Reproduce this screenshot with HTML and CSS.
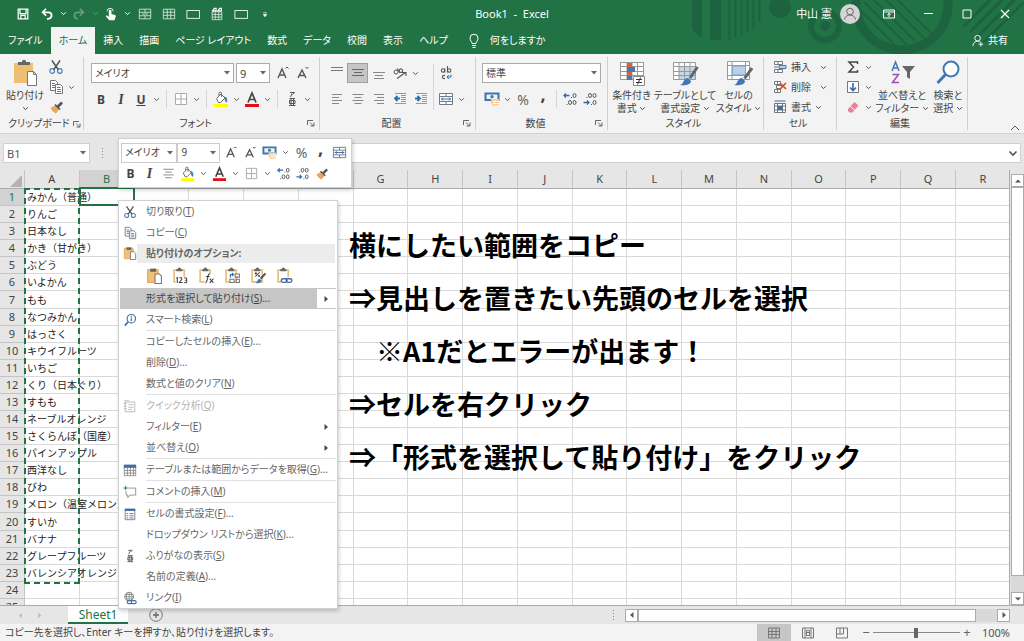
FILE: index.html
```html
<!DOCTYPE html>
<html lang="ja">
<head>
<meta charset="utf-8">
<meta name="viewport" content="width=device-width, initial-scale=1">
<title>Book1 - Excel</title>
<link rel="stylesheet" href="styles.css">
</head>
<body>
<svg class="sprite" aria-hidden="true">
  <symbol id="caret" viewBox="0 0 7 7"><path d="M1.2 2.3l2.3 2.3 2.3-2.3" fill="none" stroke="currentColor"/></symbol>
  <symbol id="grow" viewBox="0 0 16 16"><path d="M3 13L7 4l4 9M4.500 10h5" fill="none" stroke="#555" stroke-width="1.400"/><path d="M10.500 3.500l1.500-1.500 1.500 1.500" fill="none" stroke="#456"/></symbol>
  <symbol id="shrink" viewBox="0 0 16 16"><path d="M3 13L7 5l4 8M4.500 10.500h5" fill="none" stroke="#555" stroke-width="1.400"/><path d="M10.500 2l1.500 1.500L13.500 2" fill="none" stroke="#456"/></symbol>
  <symbol id="border" viewBox="0 0 16 16"><path d="M2.500 2.500h11v11h-11zM8 2.500v11M2.500 8h11" fill="#fff" stroke="#aaa"/></symbol>
  <symbol id="fill" viewBox="0 0 16 16"><path d="M1 13h14v3H1z" fill="#ffff00"/><path d="M3.500 7.500L8 3l4 4-4.500 4.500H5.500z" fill="#fff" stroke="#666"/><path d="M6 5V2.500a1.300 1.300 0 0 1 2.600 0V6" fill="none" stroke="#666"/><path d="M11.500 6c2.500 0 2.500 3 2 5-1.500-.5-1-3-2-5z" fill="#3f75b5" stroke="#3f75b5"/></symbol>
  <symbol id="fcolor" viewBox="0 0 16 16"><path d="M1 13h14v3H1z" fill="#e0101b"/><path d="M4 11.500L8 2l4 9.500M5.500 8.500h5" fill="none" stroke="#444" stroke-width="1.700"/></symbol>
  <symbol id="ruby" viewBox="0 0 16 16"><path d="M6 1.500h4.500l-2 2M8 2.500L6.500 6M5.500 7.500h5.500M5 14.500h6.500M7 7.500v7M9.500 7.500v7M5.500 9.500h5.500v3H5.500z" fill="none" stroke="#555"/></symbol>
  <symbol id="al-top" viewBox="0 0 16 16"><path d="M2 2.500h12M2 5.500h12" stroke="#777"/></symbol>
  <symbol id="al-mid" viewBox="0 0 16 16"><path d="M2 4.500h12M4 7.500h8M2 10.500h12" stroke="#666"/></symbol>
  <symbol id="al-bot" viewBox="0 0 16 16"><path d="M2 7.500h12M4 10.500h8M3 13.500h10" stroke="#888"/></symbol>
  <symbol id="al-left" viewBox="0 0 16 16"><path d="M3 3.500h10M3 6.500h7M3 9.500h10M3 12.500h7" stroke="#888"/></symbol>
  <symbol id="al-cen" viewBox="0 0 16 16"><path d="M2.500 3.500h11M4.500 6.500h7M2.500 9.500h11M4.500 12.500h7" stroke="#888"/></symbol>
  <symbol id="al-right" viewBox="0 0 16 16"><path d="M3 3.500h10M6 6.500h7M3 9.500h10M6 12.500h7" stroke="#888"/></symbol>
  <symbol id="dedent" viewBox="0 0 16 16"><path d="M3 2.500h11M9 4.500h5M9 6.500h5M9 8.500h5M9 10.500h5M3 12.500h11" stroke="#999"/><path d="M8 7.500H3M5.500 5L3 7.500 5.500 10" fill="none" stroke="#2f6cb3" stroke-width="1.800"/></symbol>
  <symbol id="indent" viewBox="0 0 16 16"><path d="M3 2.500h11M9 4.500h5M9 6.500h5M9 8.500h5M9 10.500h5M3 12.500h11" stroke="#999"/><path d="M2 7.500h5M4.500 5L7 7.500 4.500 10" fill="none" stroke="#2f6cb3" stroke-width="1.800"/></symbol>
  <symbol id="orient" viewBox="0 0 16 16"><circle cx="4" cy="7" r="2" fill="none" stroke="#555"/><path d="M5 3.500l3 4.500M8 7.500c-2-3 1-5 2.500-2.500.5 1.500-.5 2.500-2 2.500M5 13.500l8.500-6M10 7.500h4v3.500" fill="none" stroke="#555" stroke-width="1.100"/></symbol>
  <symbol id="wrap" viewBox="0 0 16 16"><g fill="none" stroke="#555" stroke-width="1.100"><circle cx="5" cy="5.500" r="1.700"/><path d="M6.800 3.500v4M9.500 1v6.500"/><circle cx="11.200" cy="5.500" r="1.700"/><path d="M7 10.500c-3.500-1-3.500 4 0 3"/></g><path d="M13 9.500v2.500H9M10.800 10L9 12l1.800 2" fill="none" stroke="#2f6cb3"/></symbol>
  <symbol id="merge" viewBox="0 0 16 16"><path d="M1.500 2.500h13v11h-13zM1.500 5.500h13M1.500 10.500h13M8 2.500v3M8 10.500v3" fill="#fff" stroke="#778"/><path d="M3 8h10M5 6.500L3.500 8 5 9.500M11 6.500L12.500 8 11 9.500" fill="none" stroke="#2f6cb3"/></symbol>
  <symbol id="money" viewBox="0 0 16 16"><path d="M1.500 2.500h13v6.500h-13z" fill="#eaf2fa" stroke="#3f75a8" stroke-width="2"/><circle cx="8" cy="5.700" r="1.600" fill="#3f75a8"/><path d="M7 8h8v6l-6 1-2-3z" fill="#f6cf9b"/><path d="M9 10.500h6M9 12.500h6" stroke="#fff"/></symbol>
  <symbol id="dec-inc" viewBox="0 0 16 16"><g fill="none" stroke="#555"><ellipse cx="12.500" cy="4.500" rx="1.500" ry="2"/><ellipse cx="8" cy="11.500" rx="1.500" ry="2"/><ellipse cx="12.500" cy="11.500" rx="1.500" ry="2"/></g><path d="M9 6h1v1H9zM4.500 13h1v1h-1z" fill="#555"/><path d="M7.500 4.500H2M4 2.500l-2 2 2 2" fill="none" stroke="#2f6cb3" stroke-width="1.300"/></symbol>
  <symbol id="dec-dec" viewBox="0 0 16 16"><g fill="none" stroke="#555"><ellipse cx="8" cy="4.500" rx="1.500" ry="2"/><ellipse cx="12.500" cy="4.500" rx="1.500" ry="2"/><ellipse cx="12.500" cy="11.500" rx="1.500" ry="2"/></g><path d="M4.500 6h1v1h-1zM9 13h1v1H9z" fill="#555"/><path d="M1.500 11.500H7M5 9.500l2 2-2 2" fill="none" stroke="#2f6cb3" stroke-width="1.300"/></symbol>
  <symbol id="brush" viewBox="0 0 16 16"><path d="M2.500 9l5-3 4 4-3.500 4.500c-2-1-4-2.500-5.500-5.500z" fill="#eda662"/><path d="M7 5.500l5 5" stroke="#555" stroke-width="1.600"/><path d="M9.500 8L14 3.500" stroke="#555" stroke-width="2.600"/></symbol>
  <symbol id="cut" viewBox="0 0 16 16"><path d="M4 1.500l6.500 9.500M12 1.500L5.500 11" stroke="#555" stroke-width="1.500"/><circle cx="4.200" cy="12" r="2.300" fill="none" stroke="#4a80b8" stroke-width="1.200"/><circle cx="11.800" cy="12" r="2.300" fill="none" stroke="#4a80b8" stroke-width="1.200"/></symbol>
  <symbol id="copy" viewBox="0 0 16 16"><g fill="#fff" stroke="#777"><path d="M2.500 1.500h5l2 2v8h-7z"/><path d="M7.500 5.500h5l2 2v7h-7z"/></g><path d="M4 4.500h3M4 6.500h3M4 8.500h3M9 8.500h3.500M9 10.500h4M9 12.500h4" stroke="#4a80b8"/></symbol>
  <symbol id="clip" viewBox="0 0 16 16"><path d="M1.500 2.500h10v12h-10z" fill="#f0c078" stroke="#e0a95a"/><path d="M4 1.500h5.500v3H4z" fill="#666"/><path d="M8.500 6.500h4l2 2v7h-6z" fill="#fff" stroke="#777"/></symbol>
  <symbol id="clipbase" viewBox="0 0 16 16"><path d="M2 3h9.500v11H2z" fill="#fff" stroke="#eabf7c" stroke-width="1.600"/><path d="M4.500 3.500v-1h1.200c0-2 2.400-2 2.400 0h1.200v1z" fill="#666" stroke="#666"/></symbol>
  <symbol id="bigclip" viewBox="0 0 26 28"><path d="M2 4h19v20H2z" fill="#eebf73"/><path d="M6 6V3h4c0-3 4-3 4 0h4v3z" fill="#666"/><path d="M15.500 12.500h6l3 3v11h-9z" fill="#fff" stroke="#777"/><path d="M21.500 12.500v3h3" fill="none" stroke="#777"/></symbol>
  <symbol id="launch" viewBox="0 0 8 8"><path d="M.5 6V1.500H6M3 3.500l3.500 3.500M7 3.500V7H3.500" fill="none" stroke="#666"/></symbol>
  <symbol id="tri-r" viewBox="0 0 8 8"><path d="M2.500 1v6L6 4z" fill="currentColor"/></symbol>
  <symbol id="tri-l" viewBox="0 0 8 8"><path d="M5.500 1v6L2 4z" fill="currentColor"/></symbol>
  <symbol id="tri-u" viewBox="0 0 8 8"><path d="M1 5.500h6L4 2.500z" fill="currentColor"/></symbol>
  <symbol id="tri-d" viewBox="0 0 8 8"><path d="M1 2.500h6L4 5.500z" fill="currentColor"/></symbol>
</svg>

<header class="top">
  <svg class="deco" viewBox="0 0 344 54" aria-hidden="true">
    <g fill="none" stroke="#1d6340">
      <path d="M12 0v28q3 7 10 9V0zM30 0h11v40h-11z" fill="#1d6340" stroke="none"/>
      <path d="M49.500 0v40M55.500 0v38M61.500 0v36M67.500 0v33M73.500 0v28M79.500 0v22" stroke-width="2"/>
      <circle cx="100" cy="7" r="11" fill="#1d6340" stroke="none"/>
      <circle cx="145" cy="26" r="14" stroke-width="6"/><circle cx="145" cy="26" r="5" fill="#1d6340" stroke="none"/>
      <circle cx="222" cy="4" r="46" stroke-width="9"/>
      <path d="M176 6l43 43M184 2l43 43M192-2l43 43M200-6l45 45M208-10l44 44" stroke-width="2"/>
      <path d="M284 26l28-28M290 32l34-34M296 38l40-40M304 42l40-40" stroke-width="3"/>
    </g>
  </svg>
  <div class="titlebar">
    <div class="qat">
      <button class="q" aria-label="上書き保存"><svg viewBox="0 0 16 16"><path d="M2.500 2.500h11v11h-11zM4.500 2.500v5h7v-5M5.500 13.500v-4h5v4" fill="none" stroke="#fff" stroke-width="1.400"/></svg></button>
      <button class="q undo" aria-label="元に戻す"><svg viewBox="0 0 16 16"><path d="M7 2L3 6l4 4M3.500 6h6c5 0 5 7 0 7.500H8" fill="none" stroke="#fff" stroke-width="2"/></svg></button>
      <button class="v" aria-label="元に戻す一覧"><svg><use href="#caret"/></svg></button>
      <button class="q off" aria-label="やり直し"><svg viewBox="0 0 16 16"><path d="M9 2l4 4-4 4M12.500 6h-6c-5 0-5 7 0 7.500" fill="none" stroke="#fff" stroke-width="2"/></svg></button>
      <button class="v off" aria-label="やり直し一覧"><svg><use href="#caret"/></svg></button>
      <button class="q" aria-label="タッチ/マウス モードの切り替え"><svg viewBox="0 0 16 16"><path d="M3.500 5a3.500 3.500 0 1 1 7 0" fill="none" stroke="#fff"/><path d="M5.500 4.500a1.500 1.500 0 0 1 3 0V8l4 1.200c1 .4 1 1 .8 2L12 15H6L2 10.500l1-1 2.500 1.500z" fill="#fff"/></svg></button>
      <button class="v" aria-label="モード一覧"><svg><use href="#caret"/></svg></button>
      <button class="q w24" aria-label="行"><svg viewBox="0 0 16 16"><path d="M1.500 2.500h13v11h-13zM1.500 6h13M1.500 10h13M8 2.500V6M8 10v3.500M4.500 8h7" fill="none" stroke="#d5e6dc"/></svg></button>
      <button class="q w24" aria-label="列"><svg viewBox="0 0 16 16"><path d="M1.500 2.500h13v11h-13zM6 2.500v11M10 2.500v11M1.500 6h13M1.500 9.500h13" fill="none" stroke="#d5e6dc"/></svg></button>
      <button class="q w24" aria-label="枠"><svg viewBox="0 0 16 16"><path d="M1 4h14.500v9H1z" fill="none" stroke="#fff"/></svg></button>
      <button class="q w24" aria-label="検索"><svg viewBox="0 0 16 16"><path d="M2.500 5.500h11v9h-11zM2.500 8.500h11M2.500 11.500h11M6 6v8M10 6v8" fill="none" stroke="#d5e6dc"/><path d="M3 4.500l2-3h2v3zM9 4.500l2-3h2v3z" fill="#217346" stroke="#fff" stroke-width="1.300"/></svg></button>
      <button class="q w24" aria-label="図形"><svg viewBox="0 0 16 16"><path d="M1 4h14.500v9H1z" fill="none" stroke="#fff"/></svg></button>
      <button class="q w24" aria-label="カスタマイズ"><svg viewBox="0 0 16 16"><path d="M6 6.500h4M6 8.500h4l-2 2.500z" fill="#fff" stroke="#fff" stroke-width=".8"/></svg></button>
    </div>
    <h1 class="doc">Book1&nbsp; -&nbsp; Excel</h1>
    <div class="win">
      <span class="user">中山 憲</span>
      <svg class="avatar" viewBox="0 0 20 20"><circle cx="10" cy="10" r="10" fill="#d5d5d5"/><circle cx="10" cy="7.500" r="3.300" fill="none" stroke="#666"/><path d="M4.500 15.500c1-6 10-6 11 0" fill="none" stroke="#666"/></svg>
      <button class="wb" aria-label="リボンの表示オプション"><svg viewBox="0 0 14 14"><path d="M1.500 3h11v8h-11zM1.500 5h11M7 10V6.500M5.200 8L7 6.300 8.800 8" fill="none" stroke="#fff"/></svg></button>
      <button class="wb" aria-label="最小化"><svg viewBox="0 0 14 14"><path d="M3 6.500h9" stroke="#fff"/></svg></button>
      <button class="wb" aria-label="最大化"><svg viewBox="0 0 14 14"><path d="M3 3h8v8H3z" fill="none" stroke="#fff"/></svg></button>
      <button class="wb" aria-label="閉じる"><svg viewBox="0 0 14 14"><path d="M3 3l8 8M11 3l-8 8" stroke="#fff" stroke-width="1.200"/></svg></button>
    </div>
  </div>
  <nav class="tabs">
    <button>ファイル</button><button class="on">ホーム</button><button>挿入</button><button>描画</button><button>ページ レイアウト</button><button>数式</button><button>データ</button><button>校閲</button><button>表示</button><button>ヘルプ</button>
    <button class="tell"><svg viewBox="0 0 12 16"><path d="M4 10.500C4 8.500 2 8 2 5.200a4 4 0 0 1 8 0C10 8 8 8.500 8 10.500zM4 12.500h4M4.500 14.500h3" fill="none" stroke="#fff"/></svg>何をしますか</button>
    <button class="share"><svg viewBox="0 0 14 14"><circle cx="6" cy="4.500" r="3" fill="none" stroke="#fff"/><path d="M1 13c.5-6 6-6 8-4M9.500 8.500v5M7 11h5" fill="none" stroke="#fff"/></svg>共有</button>
  </nav>
</header>

<section class="ribbon" aria-label="ホーム">
  <div class="group g-clip">
    <div class="body">
      <button class="big"><svg class="bi"><use href="#bigclip"/></svg><span>貼り付け</span><svg class="c"><use href="#caret"/></svg></button>
      <div class="stack">
        <button class="b" aria-label="切り取り"><svg><use href="#cut"/></svg></button>
        <div class="row"><button class="b" aria-label="コピー"><svg><use href="#copy"/></svg></button><button class="v" aria-label="コピー一覧"><svg><use href="#caret"/></svg></button></div>
        <button class="b" aria-label="書式のコピー"><svg><use href="#brush"/></svg></button>
      </div>
    </div>
    <div class="label"><span>クリップボード</span><svg class="la"><use href="#launch"/></svg></div>
  </div>
  <div class="group g-font">
    <div class="body two">
      <div class="row"><select class="sel grow" aria-label="フォント"><option>メイリオ</option></select><select class="sel size" aria-label="サイズ"><option>9</option></select><button class="b" aria-label="拡大"><svg><use href="#grow"/></svg></button><button class="b" aria-label="縮小"><svg><use href="#shrink"/></svg></button></div>
      <div class="row"><button class="b t"><b>B</b></button><button class="b t"><i>I</i></button><button class="b t"><u>U</u></button><button class="v" aria-label="下線一覧"><svg><use href="#caret"/></svg></button><i class="div"></i><button class="b" aria-label="罫線"><svg><use href="#border"/></svg></button><button class="v" aria-label="罫線一覧"><svg><use href="#caret"/></svg></button><i class="div"></i><button class="b" aria-label="塗りつぶし"><svg><use href="#fill"/></svg></button><button class="v" aria-label="塗りつぶし一覧"><svg><use href="#caret"/></svg></button><button class="b" aria-label="文字色"><svg><use href="#fcolor"/></svg></button><button class="v" aria-label="文字色一覧"><svg><use href="#caret"/></svg></button><i class="div"></i><button class="b" aria-label="ふりがな"><svg><use href="#ruby"/></svg></button><button class="v" aria-label="ふりがな一覧"><svg><use href="#caret"/></svg></button></div>
    </div>
    <div class="label"><span>フォント</span><svg class="la"><use href="#launch"/></svg></div>
  </div>
  <div class="group g-align">
    <div class="body">
      <div class="two al">
        <div class="row"><button class="b" aria-label="上揃え"><svg><use href="#al-top"/></svg></button><button class="b on" aria-label="上下中央"><svg><use href="#al-mid"/></svg></button><button class="b" aria-label="下揃え"><svg><use href="#al-bot"/></svg></button><button class="b" aria-label="方向"><svg><use href="#orient"/></svg></button><button class="v" aria-label="方向一覧"><svg><use href="#caret"/></svg></button></div>
        <div class="row"><button class="b" aria-label="左揃え"><svg><use href="#al-left"/></svg></button><button class="b" aria-label="中央揃え"><svg><use href="#al-cen"/></svg></button><button class="b" aria-label="右揃え"><svg><use href="#al-right"/></svg></button><button class="b" aria-label="インデント減"><svg><use href="#dedent"/></svg></button><button class="b" aria-label="インデント増"><svg><use href="#indent"/></svg></button></div>
      </div>
      <i class="div tall"></i>
      <div class="two">
        <div class="row"><button class="b" aria-label="折り返し"><svg><use href="#wrap"/></svg></button></div>
        <div class="row"><button class="b" aria-label="結合"><svg><use href="#merge"/></svg></button><button class="v" aria-label="結合一覧"><svg><use href="#caret"/></svg></button></div>
      </div>
    </div>
    <div class="label"><span>配置</span><svg class="la"><use href="#launch"/></svg></div>
  </div>
  <div class="group g-num">
    <div class="body two">
      <div class="row"><select class="sel grow" aria-label="表示形式"><option>標準</option></select></div>
      <div class="row"><button class="b" aria-label="通貨"><svg><use href="#money"/></svg></button><button class="v" aria-label="通貨一覧"><svg><use href="#caret"/></svg></button><button class="b t pc">%</button><button class="b t cm"><b>,</b></button><i class="div"></i><button class="b" aria-label="小数点以下を増やす"><svg><use href="#dec-inc"/></svg></button><button class="b" aria-label="小数点以下を減らす"><svg><use href="#dec-dec"/></svg></button></div>
    </div>
    <div class="label"><span>数値</span><svg class="la"><use href="#launch"/></svg></div>
  </div>
  <div class="group g-style">
    <div class="body">
      <button class="big cond"><svg class="bi" viewBox="0 0 28 28"><path d="M2.500 3.500h23v17h-23zM2.500 7.500h23M2.500 12.500h23M2.500 16.500h23M9 3.500v17M14 3.500v17M19.500 3.500v17" fill="#fff" stroke="#999"/><path d="M9 4h5v4H9zM9 13h5v4H9z" fill="#d9603b"/><path d="M9 8h8v5H9zM9 17h5v4H9z" fill="#4777ad"/><path d="M15.500 17.500h11v9h-11z" fill="#fff" stroke="#888"/><path d="M18 20.500h6M18 23.500h6M22.500 18.500l-3 7" stroke="#333"/></svg><span>条件付き<br>書式 <svg class="c"><use href="#caret"/></svg></span></button>
      <button class="big mid"><svg class="bi" viewBox="0 0 28 28"><path d="M2.500 3.500h22v17h-22z" fill="#fff"/><path d="M8 8h17v13H8z" fill="#c3d6ea"/><path d="M2.500 3.500h22v17h-22zM2.500 7.500h22M2.500 12.500h22M2.500 16.500h22M8 3.500v17M13.500 3.500v17M19 3.500v17" fill="none" stroke="#999"/><path d="M26.500 8L19 19" stroke="#666" stroke-width="3"/><path d="M9 26c4-.5 3-7 8-7l3 3c0 4-7 5-11 4z" fill="#3f78b5"/></svg><span>テーブルとして<br>書式設定 <svg class="c"><use href="#caret"/></svg></span></button>
      <button class="big cond"><svg class="bi" viewBox="0 0 28 28"><path d="M2.500 2.500h22v18h-22zM2.500 6.500h22M2.500 16.500h22M7 2.500v18M20.500 2.500v18" fill="#fff" stroke="#999"/><path d="M7.500 7h13v9h-13z" fill="#b9d0e8" stroke="#7ea3cb"/><path d="M27 9l-7.500 10.500" stroke="#666" stroke-width="3"/><path d="M9 26c4-.5 3-7 8-7l3 3c0 4-7 5-11 4z" fill="#3f78b5"/></svg><span>セルの<br>スタイル <svg class="c"><use href="#caret"/></svg></span></button>
    </div>
    <div class="label"><span>スタイル</span></div>
  </div>
  <div class="group g-cell">
    <div class="body stack">
      <button class="line"><svg class="li" viewBox="0 0 14 14"><path d="M1.500 1.500h8v3h-8zM5 1.500v3M1.500 9.500h8v3h-8zM5 9.500v3" fill="#fff" stroke="#777"/><path d="M6 5.500h7v3H6z" fill="#b9d0e8" stroke="#4777ad"/><path d="M5 7H1" stroke="#4777ad"/></svg><span>挿入</span><svg class="c"><use href="#caret"/></svg></button>
      <button class="line"><svg class="li" viewBox="0 0 14 14"><path d="M1.500 1.500h6v3h-6zM1.500 9.500h6v3h-6zM4.500 1.500v3M4.500 9.500v3M3.500 5.500h5v3h-5z" fill="#fff" stroke="#777"/><path d="M7 3l6 6M13 3L7 9" stroke="#d9472b" stroke-width="1.600"/></svg><span>削除</span><svg class="c"><use href="#caret"/></svg></button>
      <button class="line"><svg class="li" viewBox="0 0 14 14"><path d="M1.500 3.500h11v9h-11zM1.500 6h11M1.500 10h11M4.500 3.500v9M9.500 3.500v9" fill="#fff" stroke="#777"/><path d="M5 6h4.500v4H5z" fill="#3f6da5"/><path d="M1.500 1h11" stroke="#3f6da5"/></svg><span>書式</span><svg class="c near"><use href="#caret"/></svg></button>
    </div>
    <div class="label"><span>セル</span></div>
  </div>
  <div class="group g-edit">
    <div class="body">
      <div class="stack">
        <div class="row"><button class="b" aria-label="合計"><svg viewBox="0 0 16 16"><path d="M12.500 5V3H4l4.500 5L4 13h8.500v-2" fill="none" stroke="#444" stroke-width="1.500"/></svg></button><button class="v" aria-label="合計一覧"><svg><use href="#caret"/></svg></button></div>
        <div class="row"><button class="b" aria-label="フィル"><svg viewBox="0 0 16 16"><path d="M2.500 2.500h11v11h-11z" fill="#fff" stroke="#777"/><path d="M8 4v7M5 8.500L8 11.500l3-3" fill="none" stroke="#2f6cb3" stroke-width="1.600"/></svg></button><button class="v" aria-label="フィル一覧"><svg><use href="#caret"/></svg></button></div>
        <div class="row"><button class="b" aria-label="クリア"><svg viewBox="0 0 16 16"><path d="M3 10l6.500-7 4 3.500-6 7H4.500L3 12z" fill="#e8829b"/><path d="M5.500 7.500l4 3.500" stroke="#fff"/></svg></button><button class="v" aria-label="クリア一覧"><svg><use href="#caret"/></svg></button></div>
      </div>
      <button class="big sort"><svg class="bi" viewBox="0 0 28 28"><path d="M4 12L7.500 3 11 12M5 9h5" fill="none" stroke="#3f78b5" stroke-width="1.500"/><path d="M4.500 15.500h6l-6 8h6.500" fill="none" stroke="#9a4fb0" stroke-width="1.500"/><path d="M14 7h13l-5 6v7l-3-2v-5z" fill="#666"/></svg><span>並べ替えと<br>フィルター <svg class="c"><use href="#caret"/></svg></span></button>
      <button class="big find"><svg class="bi" viewBox="0 0 28 28"><circle cx="17" cy="10" r="7.500" fill="#fff" stroke="#3f78b5" stroke-width="2"/><path d="M11.500 15.500L3.500 24" stroke="#3f78b5" stroke-width="3"/></svg><span>検索と<br>選択 <svg class="c"><use href="#caret"/></svg></span></button>
    </div>
    <div class="label"><span>編集</span></div>
  </div>
  <button class="fold" aria-label="リボンを折りたたむ"><svg viewBox="0 0 10 10"><path d="M1 7l4-4 4 4" fill="none" stroke="#555"/></svg></button>
</section>

<section class="fbar">
  <select class="sel name" aria-label="名前ボックス"><option>B1</option></select>
  <svg class="dots" viewBox="0 0 3 12"><path d="M1 1h1v1H1zM1 4h1v1H1zM1 7h1v1H1zM1 10h1v1H1z" fill="#888"/></svg>
  <div class="formula"><input type="text" aria-label="数式バー"><svg viewBox="0 0 10 10"><path d="M1.500 3.500L5 7l3.500-3.500" fill="none" stroke="#555" stroke-width="1.600"/></svg></div>
</section>

<main class="sheet">
  <div class="gridwrap"><table class="grid"><thead><tr id="cols"><th class="corner"><svg viewBox="0 0 12 12"><path d="M12 0v12H0z" fill="#b4b4b4"/></svg></th></tr></thead><tbody id="rows"></tbody></table></div>
  <div class="vscroll"><button aria-label="上へ"><svg><use href="#tri-u"/></svg></button><i class="thumb"></i><i class="track"></i><button aria-label="下へ"><svg><use href="#tri-d"/></svg></button></div>
  <div class="note">
    <p>横にしたい範囲をコピー</p>
    <p>⇒見出しを置きたい先頭のセルを選択</p>
    <p>　※A1だとエラーが出ます！</p>
    <p>⇒セルを右クリック</p>
    <p>⇒「形式を選択して貼り付け」をクリック</p>
  </div>
</main>

<div class="sheetbar">
  <button class="nav" aria-label="前のシート"><svg><use href="#tri-l"/></svg></button><button class="nav" aria-label="次のシート"><svg><use href="#tri-r"/></svg></button>
  <button class="tab">Sheet1</button>
  <button class="add" aria-label="新しいシート"><svg viewBox="0 0 14 14"><circle cx="7" cy="7" r="6.300" fill="none" stroke="#777"/><path d="M7 4v6M4 7h6" stroke="#666" stroke-width="1.300"/></svg></button>
  <svg class="dots" viewBox="0 0 3 12"><path d="M1 1h1v1H1zM1 4h1v1H1zM1 7h1v1H1zM1 10h1v1H1z" fill="#888"/></svg>
  <div class="hscroll"><button aria-label="左へ"><svg><use href="#tri-l"/></svg></button><i class="thumb"></i><i class="track"></i><button aria-label="右へ"><svg><use href="#tri-r"/></svg></button></div>
</div>

<footer class="status">
  <span class="msg">コピー先を選択し、Enter キーを押すか、貼り付けを選択します。</span>
  <button class="view on" aria-label="標準"><svg viewBox="0 0 14 12"><path d="M1.500 1h11v10h-11zM1.500 4.500h11M1.500 7.500h11M5 1v10M9 1v10" fill="none" stroke="#777"/></svg></button>
  <button class="view" aria-label="ページ レイアウト"><svg viewBox="0 0 14 12"><path d="M1.500 1h11v10h-11zM4 1v10M10 1v10M5.500 3.500h3v5h-3zM5.500 5.500h3" fill="none" stroke="#777"/></svg></button>
  <button class="view" aria-label="改ページ プレビュー"><svg viewBox="0 0 14 12"><path d="M1.500 1h11v10h-11zM1.500 7h7V1M5 1v6" fill="none" stroke="#777"/></svg></button>
  <button class="pm" aria-label="縮小">−</button><input class="zoom" type="range" min="10" max="190" value="100" aria-label="ズーム"><button class="pm" aria-label="拡大">+</button>
  <span class="pct">100%</span>
</footer>

<div class="mini" role="toolbar" aria-label="ミニ ツール バー">
  <div class="row"><select class="sel m1" aria-label="フォント"><option>メイリオ</option></select><select class="sel m2" aria-label="サイズ"><option>9</option></select><button class="b" aria-label="拡大"><svg><use href="#grow"/></svg></button><button class="b" aria-label="縮小"><svg><use href="#shrink"/></svg></button><button class="b" aria-label="通貨"><svg><use href="#money"/></svg></button><button class="v" aria-label="通貨一覧"><svg><use href="#caret"/></svg></button><button class="b t pc">%</button><button class="b t cm"><b>,</b></button><button class="b" aria-label="結合"><svg><use href="#merge"/></svg></button></div>
  <div class="row"><button class="b t"><b>B</b></button><button class="b t"><i>I</i></button><button class="b" aria-label="中央揃え"><svg><use href="#al-cen"/></svg></button><button class="b" aria-label="塗りつぶし"><svg><use href="#fill"/></svg></button><button class="v" aria-label="塗りつぶし一覧"><svg><use href="#caret"/></svg></button><button class="b" aria-label="文字色"><svg><use href="#fcolor"/></svg></button><button class="v" aria-label="文字色一覧"><svg><use href="#caret"/></svg></button><button class="b" aria-label="罫線"><svg><use href="#border"/></svg></button><button class="v" aria-label="罫線一覧"><svg><use href="#caret"/></svg></button><button class="b" aria-label="小数点以下を増やす"><svg><use href="#dec-inc"/></svg></button><button class="b" aria-label="小数点以下を減らす"><svg><use href="#dec-dec"/></svg></button><button class="b" aria-label="書式のコピー"><svg><use href="#brush"/></svg></button></div>
</div>

<div class="menu" role="menu">
  <button class="mi" role="menuitem"><svg><use href="#cut"/></svg><span>切り取り(<u>T</u>)</span></button>
  <button class="mi" role="menuitem"><svg><use href="#copy"/></svg><span>コピー(<u>C</u>)</span></button>
  <div class="mi head"><svg><use href="#clip"/></svg><b>貼り付けのオプション:</b></div>
  <div class="opts">
    <button aria-label="貼り付け"><svg><use href="#clip"/></svg></button>
    <button aria-label="値"><svg viewBox="0 0 16 16"><use href="#clipbase"/><path d="M3.500 9H15v7H3.500z" fill="#fff"/><path d="M4 10.500l1-.5v5M7 10.500c2-1.500 3 .5 1.500 2L7 14.500h3M11.500 10.500c1.500-1 3.500.5 1.500 2 2 .5 1 3-1.500 2" fill="none" stroke="#444"/></svg></button>
    <button aria-label="数式"><svg viewBox="0 0 16 16"><use href="#clipbase"/><path d="M6 6h9v10H6z" fill="#fff"/><path d="M11.500 6.500c-3-1-2 8-4.500 8.500M7.500 9h3.500M11 11l3.500 4M14.500 11L11 15" fill="none" stroke="#444"/></svg></button>
    <button aria-label="行/列の入れ替え"><svg viewBox="0 0 16 16"><use href="#clipbase"/><path d="M10.500 6.500h4v3h-4zM5.500 11.500h4v3h-4zM11.500 11.500h3v3h-3z" fill="#fff" stroke="#777"/><path d="M6 10V7h3M7.500 5.500L9 7 7.500 8.500" fill="none" stroke="#2f6cb3"/></svg></button>
    <button aria-label="書式設定"><svg viewBox="0 0 16 16"><use href="#clipbase"/><path d="M14.500 6L10 11" stroke="#555" stroke-width="2"/><path d="M5 15c2 0 2-4 4-4l2 2c0 2-3 2.500-6 2z" fill="#3f78b5"/><path d="M5 9l4-4" stroke="#444"/><circle cx="5.500" cy="6" r="1" fill="#444"/><circle cx="8.500" cy="8.500" r="1" fill="#444"/></svg></button>
    <button aria-label="リンク貼り付け"><svg viewBox="0 0 16 16"><use href="#clipbase"/><path d="M5 9.500h10.500v6H5z" fill="#fff"/><rect x="5" y="11" width="5.500" height="3.500" rx="1.700" fill="none" stroke="#3f6da5" stroke-width="1.300"/><rect x="9.500" y="11" width="5.500" height="3.500" rx="1.700" fill="none" stroke="#3f6da5" stroke-width="1.300"/></svg></button>
  </div>
  <button class="mi hot" role="menuitem"><span>形式を選択して貼り付け(<u>S</u>)...</span><em><svg class="ar"><use href="#tri-r"/></svg></em></button>
  <button class="mi" role="menuitem"><svg viewBox="0 0 16 16"><circle cx="9.500" cy="6.500" r="4.800" fill="#fff" stroke="#3f6da5" stroke-width="1.300"/><path d="M6 10l-4 4.500" stroke="#3f6da5" stroke-width="2"/><path d="M9.500 6v3M9.500 3.500V5" stroke="#3f6da5" stroke-width="1.400"/></svg><span>スマート検索(<u>L</u>)</span></button>
  <hr>
  <button class="mi" role="menuitem"><span>コピーしたセルの挿入(<u>E</u>)...</span></button>
  <button class="mi" role="menuitem"><span>削除(<u>D</u>)...</span></button>
  <button class="mi" role="menuitem"><span>数式と値のクリア(<u>N</u>)</span></button>
  <hr>
  <button class="mi dim" role="menuitem" disabled><svg viewBox="0 0 16 16"><path d="M2.500 3.500h11v11h-11zM6 6.500h6M6 9.500h6M6 12h4M1 2h6M1 5h3M1 8h3M1 11h3" fill="none" stroke="#999"/></svg><span>クイック分析(<u>Q</u>)</span></button>
  <button class="mi" role="menuitem"><span>フィルター(<u>E</u>)</span><svg class="ar"><use href="#tri-r"/></svg></button>
  <button class="mi" role="menuitem"><span>並べ替え(<u>O</u>)</span><svg class="ar"><use href="#tri-r"/></svg></button>
  <hr>
  <button class="mi" role="menuitem"><svg viewBox="0 0 16 16"><path d="M1.500 2.500h13v12h-13zM1.500 8.500h13M1.500 11.500h13M5 4v10M8.500 4v10M12 4v10" fill="#fff" stroke="#888"/><path d="M1 2h14v3.500H1z" fill="#3f6da5"/></svg><span>テーブルまたは範囲からデータを取得(<u>G</u>)...</span></button>
  <hr>
  <button class="mi" role="menuitem"><svg viewBox="0 0 16 16"><path d="M6 3.500h8.500v8H8l-2.500 3v-3h-2V7" fill="#fff" stroke="#888"/><path d="M3 1v5M.5 3.500h5" stroke="#2f8a55" stroke-width="1.200"/></svg><span>コメントの挿入(<u>M</u>)</span></button>
  <hr>
  <button class="mi" role="menuitem"><svg viewBox="0 0 16 16"><path d="M2.500 2.500h11v12h-11z" fill="#fff" stroke="#777"/><path d="M2 2h12v2.500H2z" fill="#3f6da5"/><path d="M4 7.500h2M4 10h2M4 12.500h2M7.500 7.500H12M7.500 10H12M7.500 12.500H12" stroke="#3f6da5"/></svg><span>セルの書式設定(<u>F</u>)...</span></button>
  <button class="mi" role="menuitem"><span>ドロップダウン リストから選択(<u>K</u>)...</span></button>
  <button class="mi" role="menuitem"><svg><use href="#ruby"/></svg><span>ふりがなの表示(<u>S</u>)</span></button>
  <button class="mi" role="menuitem"><span>名前の定義(<u>A</u>)...</span></button>
  <button class="mi" role="menuitem"><svg viewBox="0 0 16 16"><circle cx="7" cy="6.500" r="5" fill="#fff" stroke="#777"/><path d="M2 6.500h10M7 1.500v10M3 4h8M3 9h8M5 2c-1.500 3-1.500 6 0 9M9 2c1.500 3 1.500 6 0 9" fill="none" stroke="#777" stroke-width=".8"/><rect x="5" y="11" width="5.500" height="3.500" rx="1.700" fill="#fff" stroke="#3f6da5" stroke-width="1.400"/><rect x="9.500" y="11" width="5.500" height="3.500" rx="1.700" fill="#fff" stroke="#3f6da5" stroke-width="1.400"/></svg><span>リンク(<u>I</u>)</span></button>
</div>
<script src="sheet.js"></script>
</body>
</html>
```

FILE: styles.css
```css
*, *::before, *::after { box-sizing: border-box; }
body {
  margin: 0;
  height: 100vh;
  display: flex;
  flex-direction: column;
  overflow: hidden;
  background: #e6e6e6;
  color: #444;
  font: 10px/13px "Noto Sans", "Noto Sans CJK JP", sans-serif;
  font-feature-settings: "palt";
}
button, select, input { font: inherit; color: inherit; font-feature-settings: inherit; }
button { display: flex; align-items: center; justify-content: center; padding: 0; border: 0; background: none; white-space: nowrap; }
svg { display: block; flex: none; }
.sprite { position: absolute; width: 0; height: 0; }
.row { display: flex; align-items: center; }

.top { position: relative; background: #217346; color: #fff; }
.deco { position: absolute; top: 0; right: 0; width: 344px; height: 54px; }
.titlebar { position: relative; display: grid; grid-template-columns: 1fr auto 1fr; align-items: center; height: 27px; }
.qat { display: flex; align-items: center; padding-left: 13px; }
.q { width: 20px; height: 20px; }
.q svg { width: 14px; height: 14px; }
.qat .v { width: 12px; }
.undo { margin-left: 4px; }
.qat .w24 { width: 24px; }
.off { opacity: .3; }
.doc { margin: 0; font-size: 11px; font-weight: 400; }
.win { display: flex; align-items: center; justify-content: flex-end; }
.user { font-size: 11px; }
.avatar { width: 20px; height: 20px; margin: 0 9px 0 8px; }
.wb { width: 39px; height: 24px; }
.wb:last-child { width: 38px; }
.wb svg { width: 14px; height: 14px; }
.tabs { position: relative; display: flex; height: 27px; }
.tabs button { padding: 0 8px; }
.tabs .on { background: #f3f3f3; color: #217346; }
.tabs .tell { gap: 10px; padding-left: 12px; }
.tell svg { width: 12px; height: 16px; }
.tabs .share { margin-left: auto; gap: 3px; padding-right: 16px; }
.share svg { width: 13px; height: 13px; }

.ribbon { display: flex; background: #f3f3f3; border-bottom: 1px solid #d2d2d2; height: 80px; padding-top: 3px; }
.group { display: flex; flex-direction: column; border-right: 1px solid #cfcfcf; margin-bottom: 3px; }
.body { display: flex; flex: 1; padding: 0 6px; }
.two { display: flex; flex-direction: column; justify-content: space-between; padding-top: 6px; padding-bottom: 7px; }
.label { display: flex; align-items: center; height: 14px; padding-right: 4px; }
.label span { flex: 1; text-align: center; }
.la { width: 8px; height: 8px; }
.b { width: 20px; height: 20px; flex: none; }
.b svg { width: 16px; height: 16px; }
.v { width: 11px; height: 20px; flex: none; color: #555; }
.top .v { color: #fff; }
.v svg, .c { width: 7px; height: 7px; }
.t { font-size: 12px; color: #444; }
.t b, .t i, .t u { font-weight: 700; }
.t i { font-family: "Liberation Serif", serif; font-size: 14px; }
.t.pc { font-size: 14px; color: #666; }
.cm { font-size: 18px; line-height: 10px; padding-bottom: 10px; }
.on { background: #c6c6c6; }
.al .on { border: 1px solid #a0a0a0; }
.div { width: 1px; height: 18px; margin: 0 4px; background: #d5d5d5; }
.div.tall { height: 46px; margin: 7px 2px 0; }
.sel {
  appearance: none;
  height: 20px;
  padding: 0 3px;
  border: 1px solid #ababab;
  border-radius: 0;
  background: #fff url("data:image/svg+xml,%3Csvg xmlns='http://www.w3.org/2000/svg' width='6' height='4'%3E%3Cpath d='M0 0h6L3 3.500z' fill='%23666'/%3E%3C/svg%3E") no-repeat right 3px center;
  color: #444;
}
.grow { flex: 1; min-width: 0; }
.size { width: 34px; margin: 0 3px 0 2px; font-size: 11px; }
.stack { display: flex; flex-direction: column; justify-content: flex-start; }
.big { flex: none; flex-direction: column; justify-content: flex-start; width: 48px; line-height: 13px; }
.bi { width: 28px; height: 28px; margin: 2px 0; }
.big .c { margin-top: 3px; }
.big span .c { display: inline-block; margin: 0; }
.cond { width: 45px; }
.mid { width: 62px; }

.g-clip { width: 84px; }
.g-clip .body { padding: 0; }
.g-clip .big { width: 42px; margin-left: 4px; }
.g-clip .label { padding-right: 2px; }
.g-clip .label span { text-align: left; padding-left: 8px; }
.g-font { width: 236px; }
.g-font .body { padding-left: 7px; }
.g-align { width: 156px; }
.al .b { width: 21px; }
.al { width: 105px; }
.g-num { width: 132px; }
.g-num .div { margin: 0 3px; }
.g-style { width: 156px; }
.g-style .body { padding: 0 1px; }
.g-cell { width: 73px; }
.g-cell .body { padding: 0 9px; }
.line { justify-content: flex-start; height: 20px; }
.li { width: 14px; height: 14px; margin-right: 4px; }
.line .c { margin-left: 9px; }
.line .near { margin-left: 4px; }
.g-edit { width: 131px; }
.g-edit .body { padding: 0 0 0 6px; }
.sort { width: 56px; }
.find { width: 36px; }
.fold { margin: auto 4px 0 auto; width: 10px; height: 10px; }
.fold svg { width: 10px; height: 10px; }

.fbar { display: flex; align-items: center; height: 36px; padding: 2px 3px 0; }
.name { width: 87px; border-color: #d0d0d0; font-size: 11px; color: #555; }
.dots { width: 3px; height: 12px; margin: 0 11px; }
.formula { display: flex; align-items: center; flex: 1; height: 20px; margin-left: 74px; padding-right: 2px; background: #fff; border: 1px solid #d0d0d0; }
.formula input { flex: 1; min-width: 0; border: 0; background: none; padding: 0 4px; }
.formula svg { width: 10px; height: 10px; }

.sheet { position: relative; display: flex; flex: 1; min-height: 0; border-bottom: 1px solid #ababab; }
.gridwrap { flex: 1; overflow: hidden; border-right: 1px solid #ababab; }
.grid { width: calc(100% + 2px); height: calc(100% + 11px); table-layout: fixed; border-collapse: separate; border-spacing: 0; background: #fff; font-feature-settings: normal; }
.grid th { padding: 0; font-weight: 400; font-size: 11px; line-height: 16px; background: #e6e6e6; color: #444; border-right: 1px solid #c4c4c4; border-bottom: 1px solid #c4c4c4; }
.grid thead th { height: 19px; border-bottom-color: #ababab; }
.grid .corner { width: 25px; }
.corner svg { width: 12px; height: 12px; margin: 3px 0 0 10px; }
.grid td { padding: 0 0 0 2px; line-height: 16px; white-space: nowrap; border-right: 1px solid #d9d9d9; border-bottom: 1px solid #d9d9d9; color: #222; }
.grid th.sel-h { background: #d2d2d2; color: #217346; }
.ants, .cursor { position: relative; }
.ants::after { content: ""; position: absolute; z-index: 1; left: -1px; top: -1px; width: calc(100% + 2px); height: calc(2300% + 26px); border: 2px dashed #217346; }
.cursor::after { content: ""; position: absolute; inset: -2px -1px -1px -1px; border: 2px solid #217346; }
.vscroll, .hscroll { display: flex; background: #d9d9d9; }
.vscroll { flex-direction: column; width: 13px; margin: 4px 0 0 1px; }
.vscroll button, .hscroll button { width: 13px; height: 13px; background: #fff; border: 1px solid #ababab; }
.vscroll button svg, .hscroll button svg { width: 8px; height: 8px; color: #555; }
.thumb { background: #fff; border: 1px solid #ababab; }
.vscroll .thumb { flex: 24; width: 13px; }
.vscroll .track { flex: 1; }
.note { position: absolute; left: 349px; top: 48px; color: #000; font-size: 27px; font-weight: 700; line-height: 53px; white-space: nowrap; font-feature-settings: normal; font-family: "Noto Sans CJK JP", sans-serif; }
.note p { margin: 0; }

.sheetbar { display: flex; align-items: center; height: 18px; padding-right: 14px; }
.nav { width: 19px; height: 16px; color: #bbb; }
.nav:first-child { margin-left: 11px; }
.nav svg { width: 7px; height: 7px; }
.tab { align-self: stretch; width: 60px; margin-left: 19px; background: #fff; color: #217346; border-bottom: 2px solid #217346; font-size: 12px; }
.add { margin: 0 auto 0 21px; }
.add svg { width: 14px; height: 14px; }
.sheetbar .dots { margin: 0 10px; }
.hscroll { width: 385px; }
.hscroll .thumb { flex: 16; }
.hscroll .track { flex: 1; }

.status { display: flex; align-items: center; height: 17px; padding-right: 14px; background: #f3f3f3; }
.msg { flex: 1; padding-left: 5px; }
.view { width: 34px; height: 17px; }
.view svg { width: 14px; height: 12px; }
.pm { width: 14px; height: 16px; font-size: 13px; color: #666; }
.zoom { appearance: none; width: 87px; height: 14px; margin: 0; background: linear-gradient(#888, #888) center / 100% 1px no-repeat; }
.zoom::-webkit-slider-thumb { appearance: none; width: 4px; height: 10px; background: #666; }
.pct { font-size: 11px; margin-left: 8px; color: #555; }

.mini, .menu { position: absolute; left: 118px; background: #fff; border: 1px solid #d0d0d0; box-shadow: 1px 2px 4px #0003; }
.mini { top: 138px; width: 234px; padding: 3px 2px; }
.mini .row { height: 21px; }
.mini .b { width: 19px; }
.mini .b svg { width: 15px; height: 15px; }
.mini .v { width: 13px; }
.mini .sel { border-color: #ccc; }
.m1 { width: 57px; }
.m2 { width: 43px; margin-right: 2px; }
.menu { top: 200px; width: 220px; padding: 0 1px; color: #666; }
.mi { position: relative; justify-content: flex-start; width: 100%; height: 21px; padding-left: 26px; display: flex; align-items: center; }
.mi > svg:first-child { width: 14px; height: 14px; margin: 0 9px 0 -23px; }
.mi u, .t u { text-underline-offset: 1px; }
.menu .head { padding-right: 1px; height: 20px; }
.head b { flex: 1; height: 19px; line-height: 19px; padding-left: 9px; margin-left: -9px; color: #666; background: #ececec; }
.opts { display: flex; gap: 6px; height: 25px; padding-left: 24px; align-items: center; }
.opts button { width: 20px; height: 20px; }
.opts svg { width: 17px; height: 17px; }
.hot { background: #c6c6c6; color: #444; }
.hot em { align-self: stretch; display: flex; align-items: center; width: 19px; margin: 1px 0 1px auto; padding-left: 5px; background: #fff; }
.ar { width: 8px; height: 8px; color: #444; }
.mi > .ar { margin: 0 6px 0 auto; }
.dim { color: #b5b5b5; }
.dim svg { opacity: .7; }
.menu hr { height: 1px; margin: 0 0 0 26px; border: 0; background: #e1e1e1; }
```

FILE: sheet.js
```js
const fruit = ["みかん（普通）", "りんご", "日本なし", "かき（甘がき）", "ぶどう", "いよかん", "もも", "なつみかん", "はっさく", "キウイフルーツ", "いちご", "くり（日本ぐり）", "すもも", "ネーブルオレンジ", "さくらんぼ（国産）", "パインアップル", "西洋なし", "びわ", "メロン（温室メロン）", "すいか", "バナナ", "グレープフルーツ", "バレンシアオレンジ"];
const letters = "ABCDEFGHIJKLMNOPQR".split("");
const head = document.getElementById("cols");
const body = document.getElementById("rows");
letters.forEach((l) => {
  const th = document.createElement("th");
  th.textContent = l;
  if (l === "B") th.className = "sel-h";
  head.append(th);
});
for (let r = 1; r <= 25; r++) {
  const tr = document.createElement("tr");
  const th = document.createElement("th");
  th.textContent = r;
  if (r === 1) th.className = "sel-h";
  tr.append(th);
  letters.forEach((l, c) => {
    const td = document.createElement("td");
    if (c === 0) td.textContent = fruit[r - 1] || "";
    if (r === 1 && c === 0) td.className = "ants";
    if (r === 1 && c === 1) td.className = "cursor";
    tr.append(td);
  });
  body.append(tr);
}
```
